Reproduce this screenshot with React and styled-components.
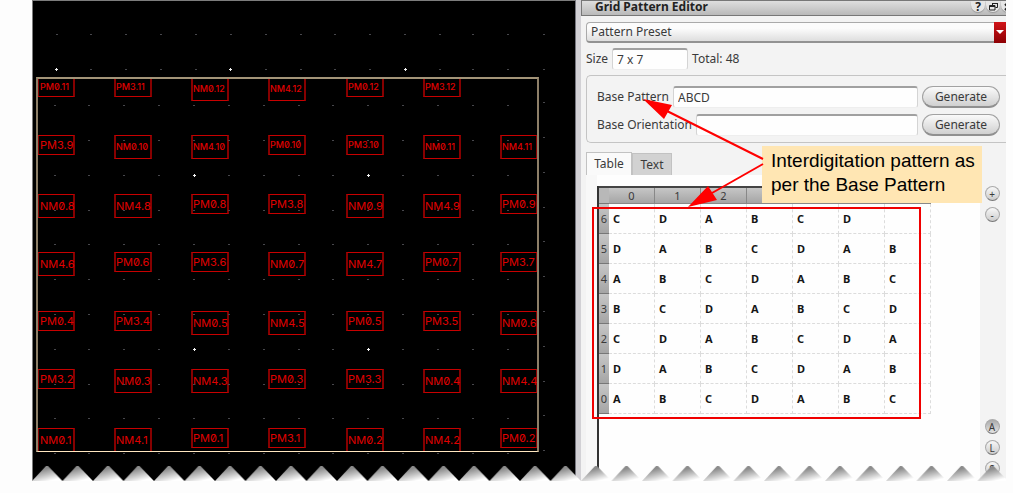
import React from "react";
import styled, { createGlobalStyle } from "styled-components";

const GlobalStyle = createGlobalStyle`
  * { box-sizing: border-box; }
  body {
    margin: 0;
    background: #fdfdfd;
    color: #3a3a3a;
    font: 12px/16px "Noto Sans", "Open Sans", sans-serif;
  }
  button, input, select { font: inherit; color: inherit; margin: 0; }
`;

const Page = styled.main`
  position: relative;
  display: flex;
  margin: 0 7px 12px 32px;
  overflow: hidden;
`;

/* ---------- layout canvas ---------- */

const Canvas = styled.section`
  position: relative;
  flex: none;
  width: 543px;
  height: 481px;
  background: #000;
  border-top: 1px solid #7c7c7c;
  border-left: 1px solid #7c7c7c;
  overflow: hidden;
`;

const GridDots = styled.svg`
  position: absolute;
  inset: 0;
  width: 100%;
  height: 100%;
`;

const Boundary = styled.div`
  position: absolute;
  left: 3px;
  top: 76px;
  width: 503px;
  height: 375px;
  border: 2px solid #8d7f68;
  border-bottom: 1px solid #ffe7c0;
  border-top-color: #a39478;
  overflow: hidden;
`;

const Device = styled.div`
  position: absolute;
  left: ${(p) => p.$x}px;
  top: ${(p) => p.$y}px;
  width: 38px;
  height: ${(p) => (p.$tall ? 24 : 20)}px;
  padding-left: ${(p) => (p.$indent ? 1 : 0)}px;
  display: flex;
  align-items: center;
  border: solid;
  border-width: 1px 2px;
  border-color: #c80000 #860000;
  color: #e00000;
  font: ${(p) => (p.$small ? "500 9px" : "400 11px")}/12px Inter, sans-serif;
  font-feature-settings: "zero" 1;
  white-space: nowrap;
`;

const deviceRows = [
  ["PM0.11", "PM3.11", "NM0.12", "NM4.12", "PM0.12", "PM3.12", null],
  ["PM3.9", "NM0.10", "NM4.10", "PM0.10", "PM3.10", "NM0.11", "NM4.11"],
  ["NM0.8", "NM4.8", "PM0.8", "PM3.8", "NM0.9", "NM4.9", "PM0.9"],
  ["NM4.6", "PM0.6", "PM3.6", "NM0.7", "NM4.7", "PM0.7", "PM3.7"],
  ["PM0.4", "PM3.4", "NM0.5", "NM4.5", "PM0.5", "PM3.5", "NM0.6"],
  ["PM3.2", "NM0.3", "NM4.3", "PM0.3", "PM3.3", "NM0.4", "NM4.4"],
  ["NM0.1", "NM4.1", "PM0.1", "PM3.1", "NM0.2", "NM4.2", "PM0.2"],
];
const deviceX = [-1, 76, 153, 230, 308, 385, 462];
const deviceY = [-2, 56, 115, 173, 232, 290, 349];

const dotX = [22, 56, 91, 126, 161, 196, 231, 266, 300, 335, 370, 405, 440, 475, 511];
const dotY = [33, 68, 104, 139, 174, 209, 243, 278, 313, 348, 383, 417, 452];
const majorDots = [[24, 68], [198, 68], [373, 68], [162, 174], [336, 174], [162, 348], [336, 348]];

function LayoutCanvas() {
  return (
    <Canvas aria-label="Layout">
      <Boundary>
        {deviceRows.map((row, r) =>
          row.map(
            (name, c) =>
              name && (
                <Device
                  key={name}
                  $x={deviceX[c]}
                  $y={deviceY[r]}
                  $tall={name[0] === "N"}
                  $small={name.length > 5}
                  $indent={c === 0}
                >
                  {name}
                </Device>
              )
          )
        )}
      </Boundary>
      <GridDots aria-hidden="true">
        {dotY.map((y, r) =>
          dotX.map((x, c) => (
            <rect
              key={`${x}-${y}`}
              x={r < 2 && c < 12 ? x + 1 : x - 1}
              y={c === 14 && r > 1 ? y - 3 : y}
              width="2"
              height="1"
              fill="#47474c"
            />
          ))
        )}
        {majorDots.map(([x, y]) => (
          <path key={`${x}-${y}`} d={`M${x - 2} ${y}h3v1h-3zM${x - 1} ${y - 1}h1v3h-1z`} fill="#f4f4f4" />
        ))}
      </GridDots>
    </Canvas>
  );
}

/* ---------- editor panel ---------- */

const Splitter = styled.div`
  flex: none;
  width: 6px;
  background: #d2d1d5;
  border-left: 1px solid #77777f;
`;

const Panel = styled.section`
  position: relative;
  flex: 1;
  min-width: 0;
  display: flex;
  flex-direction: column;
  background: #f3f3f3;
  overflow: hidden;
`;

const TitleBar = styled.header`
  display: flex;
  justify-content: space-between;
  height: 16px;
  padding-left: 13px;
  background: linear-gradient(#dedede, #b9b9b9);
  border: solid #777;
  border-width: 1px 0 1px 1px;
  overflow: hidden;
`;

const Title = styled.h1`
  margin: 0;
  font-size: 12px;
  line-height: 11px;
  color: #222;
`;

const WindowButtons = styled.div`
  display: flex;
  gap: 1px;
  margin-right: -9px;
`;

const WindowButton = styled.button`
  width: 14px;
  height: 11px;
  padding: 0;
  border: 0;
  border-radius: 0 0 7px 7px;
  background: #e6e6e6;
  box-shadow: 0 1px 1px #999;
  color: #222;
  font-weight: 700;
  line-height: 10px;
  display: grid;
  place-items: center;
`;

const PresetBox = styled.div`
  position: relative;
  margin: 6px 0 0 5px;
`;

const Preset = styled.select`
  appearance: none;
  display: block;
  width: 100%;
  height: 21px;
  padding: 0 16px 0 4px;
  border: 1px solid #aaa;
  border-bottom: 2px solid #929292;
  border-right: 0;
  border-radius: 4px 0 0 4px;
  background: linear-gradient(#fcfcfc 30%, #dedede);
  outline: 0;
`;

const PresetArrow = styled.span`
  position: absolute;
  right: 0;
  top: 0;
  bottom: 0;
  width: 12px;
  display: grid;
  place-items: center;
  background: linear-gradient(#d01418, #8d0004);
  pointer-events: none;
`;

const FieldRow = styled.div`
  display: flex;
  align-items: center;
  gap: 4px;
`;

const SizeRow = styled(FieldRow)`
  margin: 5px 0 5px 5px;
`;

const TextField = styled.input`
  flex: ${(p) => (p.$fixed ? "none" : 1)};
  width: ${(p) => (p.$fixed ? "76px" : "0")};
  min-width: 0;
  height: 22px;
  padding: 0 4px;
  background: #fefefe;
  border: 1px solid #d4d4d4;
  border-top: 2px solid #a0a0a0;
  border-bottom-color: #eee;
  border-radius: 3px;
  outline: 0;
`;

const Group = styled.fieldset`
  display: flex;
  flex-direction: column;
  gap: 6px;
  min-width: 0;
  margin: 0 0 0 5px;
  padding: 10px 6px 6px 10px;
  border: 1px solid #c4c4c4;
  border-right: 0;
  border-radius: 5px 0 0 5px;
`;

const PushButton = styled.button`
  width: 78px;
  height: 22px;
  padding: 0;
  border: 1px solid #a2a2a2;
  border-bottom: 2px solid #909090;
  border-radius: 11px;
  background: linear-gradient(#fafafa, #d0d0d0);
`;

const Tabs = styled.div`
  display: flex;
  align-items: flex-end;
  margin: 9px 0 0 5px;
`;

const Tab = styled.button`
  width: ${(p) => (p.$active ? 46 : 40)}px;
  height: ${(p) => (p.$active ? 23 : 22)}px;
  padding: 0;
  border: 1px solid #c2c2c2;
  border-bottom: 0;
  background: ${(p) => (p.$active ? "#fafafa" : "#d2d2d2")};
`;

const Body = styled.div`
  flex: 1;
  display: flex;
  margin-left: 5px;
`;

const Pane = styled.div`
  flex: 1;
  min-width: 0;
  padding: 11px 0 0 11px;
  background: linear-gradient(90deg, #f8f8f8 11px, #fefefe 11px);
`;

const TableFrame = styled.div`
  height: 100%;
  border-left: 2px solid #333;
`;

const PatternTable = styled.table`
  width: 332px;
  table-layout: fixed;
  border-collapse: separate;
  border-spacing: 0;
  border-top: 2px solid #444;
  font-size: 11px;
`;

const ColHead = styled.th`
  height: 16px;
  padding: 0;
  font-weight: 400;
  line-height: 14px;
  background: linear-gradient(#c6c6c6, #a5a5a5);
  border-right: 1px solid #888;
  border-bottom: 1px solid #888;
`;

const Corner = styled.td`
  width: 10px;
  padding: 0;
  background: #b8b8b8;
  border-bottom: 1px solid #777;
`;

const RowHead = styled.th`
  height: 30px;
  padding: 0;
  font-weight: 400;
  background: linear-gradient(#c6c6c6, #a5a5a5);
  border-bottom: 1px solid #777;
`;

const Cell = styled.td`
  height: 30px;
  padding: 0 4px;
  font-weight: 700;
  color: #151515;
  border: dashed #dcdcdc;
  border-width: 0 1px 1px 0;
`;

const Tools = styled.div`
  flex: none;
  width: 26px;
  display: flex;
  flex-direction: column;
  align-items: center;
  justify-content: space-between;
  padding: 11px 2px 5px 0;
`;

const ToolGroup = styled.div`
  display: flex;
  flex-direction: column;
  gap: 6px;
`;

const RoundButton = styled.button`
  width: 15px;
  height: 15px;
  padding: 0;
  border: 1px solid #aaa;
  border-bottom-color: #777;
  border-radius: 50%;
  background: ${(p) => (p.$pressed ? "linear-gradient(#aaa, #e4e4e4)" : "linear-gradient(#f8f8f8, #ccc)")};
  font-size: 10px;
  line-height: 12px;
`;

const columnLabels = ["0", "1", "2", "", "", "", ""];
const patternRows = ["CDABCD ", "DABCDAB", "ABCDABC", "BCDABCD", "CDABCDA", "DABCDAB", "ABCDABC"];

/* ---------- annotation ---------- */

const Highlight = styled.div`
  position: absolute;
  left: 11px;
  top: 207px;
  width: 329px;
  height: 212px;
  border: 2px solid #f00000;
  pointer-events: none;
`;

const Arrows = styled.svg`
  position: absolute;
  left: 0;
  top: 0;
  pointer-events: none;
`;

const Callout = styled.p`
  position: absolute;
  left: 181px;
  top: 146px;
  width: 220px;
  margin: 0;
  padding: 3px 0 6px 9px;
  background: #ffe6b3;
  color: #000;
  font: 19px/24px "Liberation Sans", Arial, sans-serif;
  white-space: nowrap;
`;

const TornEdge = styled.svg`
  position: absolute;
  left: 0;
  bottom: 0;
  width: 100%;
  height: 15px;
`;

function EditorPanel() {
  return (
    <Panel>
      <TitleBar>
        <Title>Grid Pattern Editor</Title>
        <WindowButtons>
          <WindowButton aria-label="Help">?</WindowButton>
          <WindowButton aria-label="Restore">
            <svg width="9" height="9" fill="none" stroke="#222">
              <path d="M3 1.5h5.500M3.500 1v2M8.500 1v4.500H6.500M0.500 3.500h5.500v4.500h-5.500zM0.500 4.500h5.500" />
            </svg>
          </WindowButton>
          <WindowButton aria-label="Close">
            <svg width="8" height="8" stroke="#222" strokeWidth="2">
              <path d="M1 1l6 6M7 1l-6 6" />
            </svg>
          </WindowButton>
        </WindowButtons>
      </TitleBar>

      <PresetBox>
        <Preset aria-label="Pattern Preset">
          <option>Pattern Preset</option>
        </Preset>
        <PresetArrow>
          <svg width="8" height="5"><path d="M0 0h8l-4 4z" fill="#fff" /></svg>
        </PresetArrow>
      </PresetBox>

      <SizeRow>
        <label htmlFor="size">Size</label>
        <TextField id="size" $fixed defaultValue="7 x 7" />
        <span>Total: 48</span>
      </SizeRow>

      <Group>
        <FieldRow>
          <label htmlFor="base-pattern">Base Pattern</label>
          <TextField id="base-pattern" defaultValue="ABCD" />
          <PushButton>Generate</PushButton>
        </FieldRow>
        <FieldRow>
          <label htmlFor="base-orientation">Base Orientation</label>
          <TextField id="base-orientation" />
          <PushButton>Generate</PushButton>
        </FieldRow>
      </Group>

      <Tabs role="tablist">
        <Tab role="tab" aria-selected="true" $active>Table</Tab>
        <Tab role="tab" aria-selected="false">Text</Tab>
      </Tabs>

      <Body>
        <Pane>
          <TableFrame>
            <PatternTable>
              <thead>
                <tr>
                  <Corner />
                  {columnLabels.map((label, n) => (
                    <ColHead key={n} scope="col">{label}</ColHead>
                  ))}
                </tr>
              </thead>
              <tbody>
                {patternRows.map((row, i) => (
                  <tr key={i}>
                    <RowHead scope="row">{6 - i}</RowHead>
                    {[...row].map((letter, c) => (
                      <Cell key={c}>{letter.trim()}</Cell>
                    ))}
                  </tr>
                ))}
              </tbody>
            </PatternTable>
          </TableFrame>
        </Pane>
        <Tools>
          <ToolGroup>
            <RoundButton>+</RoundButton>
            <RoundButton>-</RoundButton>
          </ToolGroup>
          <ToolGroup>
            <RoundButton $pressed>A</RoundButton>
            <RoundButton>L</RoundButton>
            <RoundButton>S</RoundButton>
          </ToolGroup>
        </Tools>
      </Body>

      <Highlight />
      <Callout>
        Interdigitation pattern as
        <br />
        per the Base Pattern
      </Callout>
      <Arrows width="184" height="210" fill="#f00" stroke="#f00" aria-hidden="true">
        <path d="M182 159L86 111M182 164L131 193" strokeWidth="2" />
        <path d="M62 99l29 6-8 14zM107 207l20-21 9 14z" stroke="none" />
      </Arrows>
    </Panel>
  );
}

export default function App() {
  return (
    <>
      <GlobalStyle />
      <Page>
        <LayoutCanvas />
        <Splitter />
        <EditorPanel />
        <TornEdge aria-hidden="true">
          <defs>
            <linearGradient id="fold" x1="0.2" y1="0" x2="0.7" y2="1">
              <stop offset="0.25" stopColor="#8c8c8c" />
              <stop offset="0.6" stopColor="#c4c4c4" />
              <stop offset="0.95" stopColor="#fff" />
            </linearGradient>
            <pattern id="teeth" width="30.5" height="15" patternUnits="userSpaceOnUse">
              <path d="M0 15L14 0h2L30.5 15z" fill="url(#fold)" />
            </pattern>
          </defs>
          <rect width="100%" height="15" fill="url(#teeth)" />
        </TornEdge>
      </Page>
    </>
  );
}
